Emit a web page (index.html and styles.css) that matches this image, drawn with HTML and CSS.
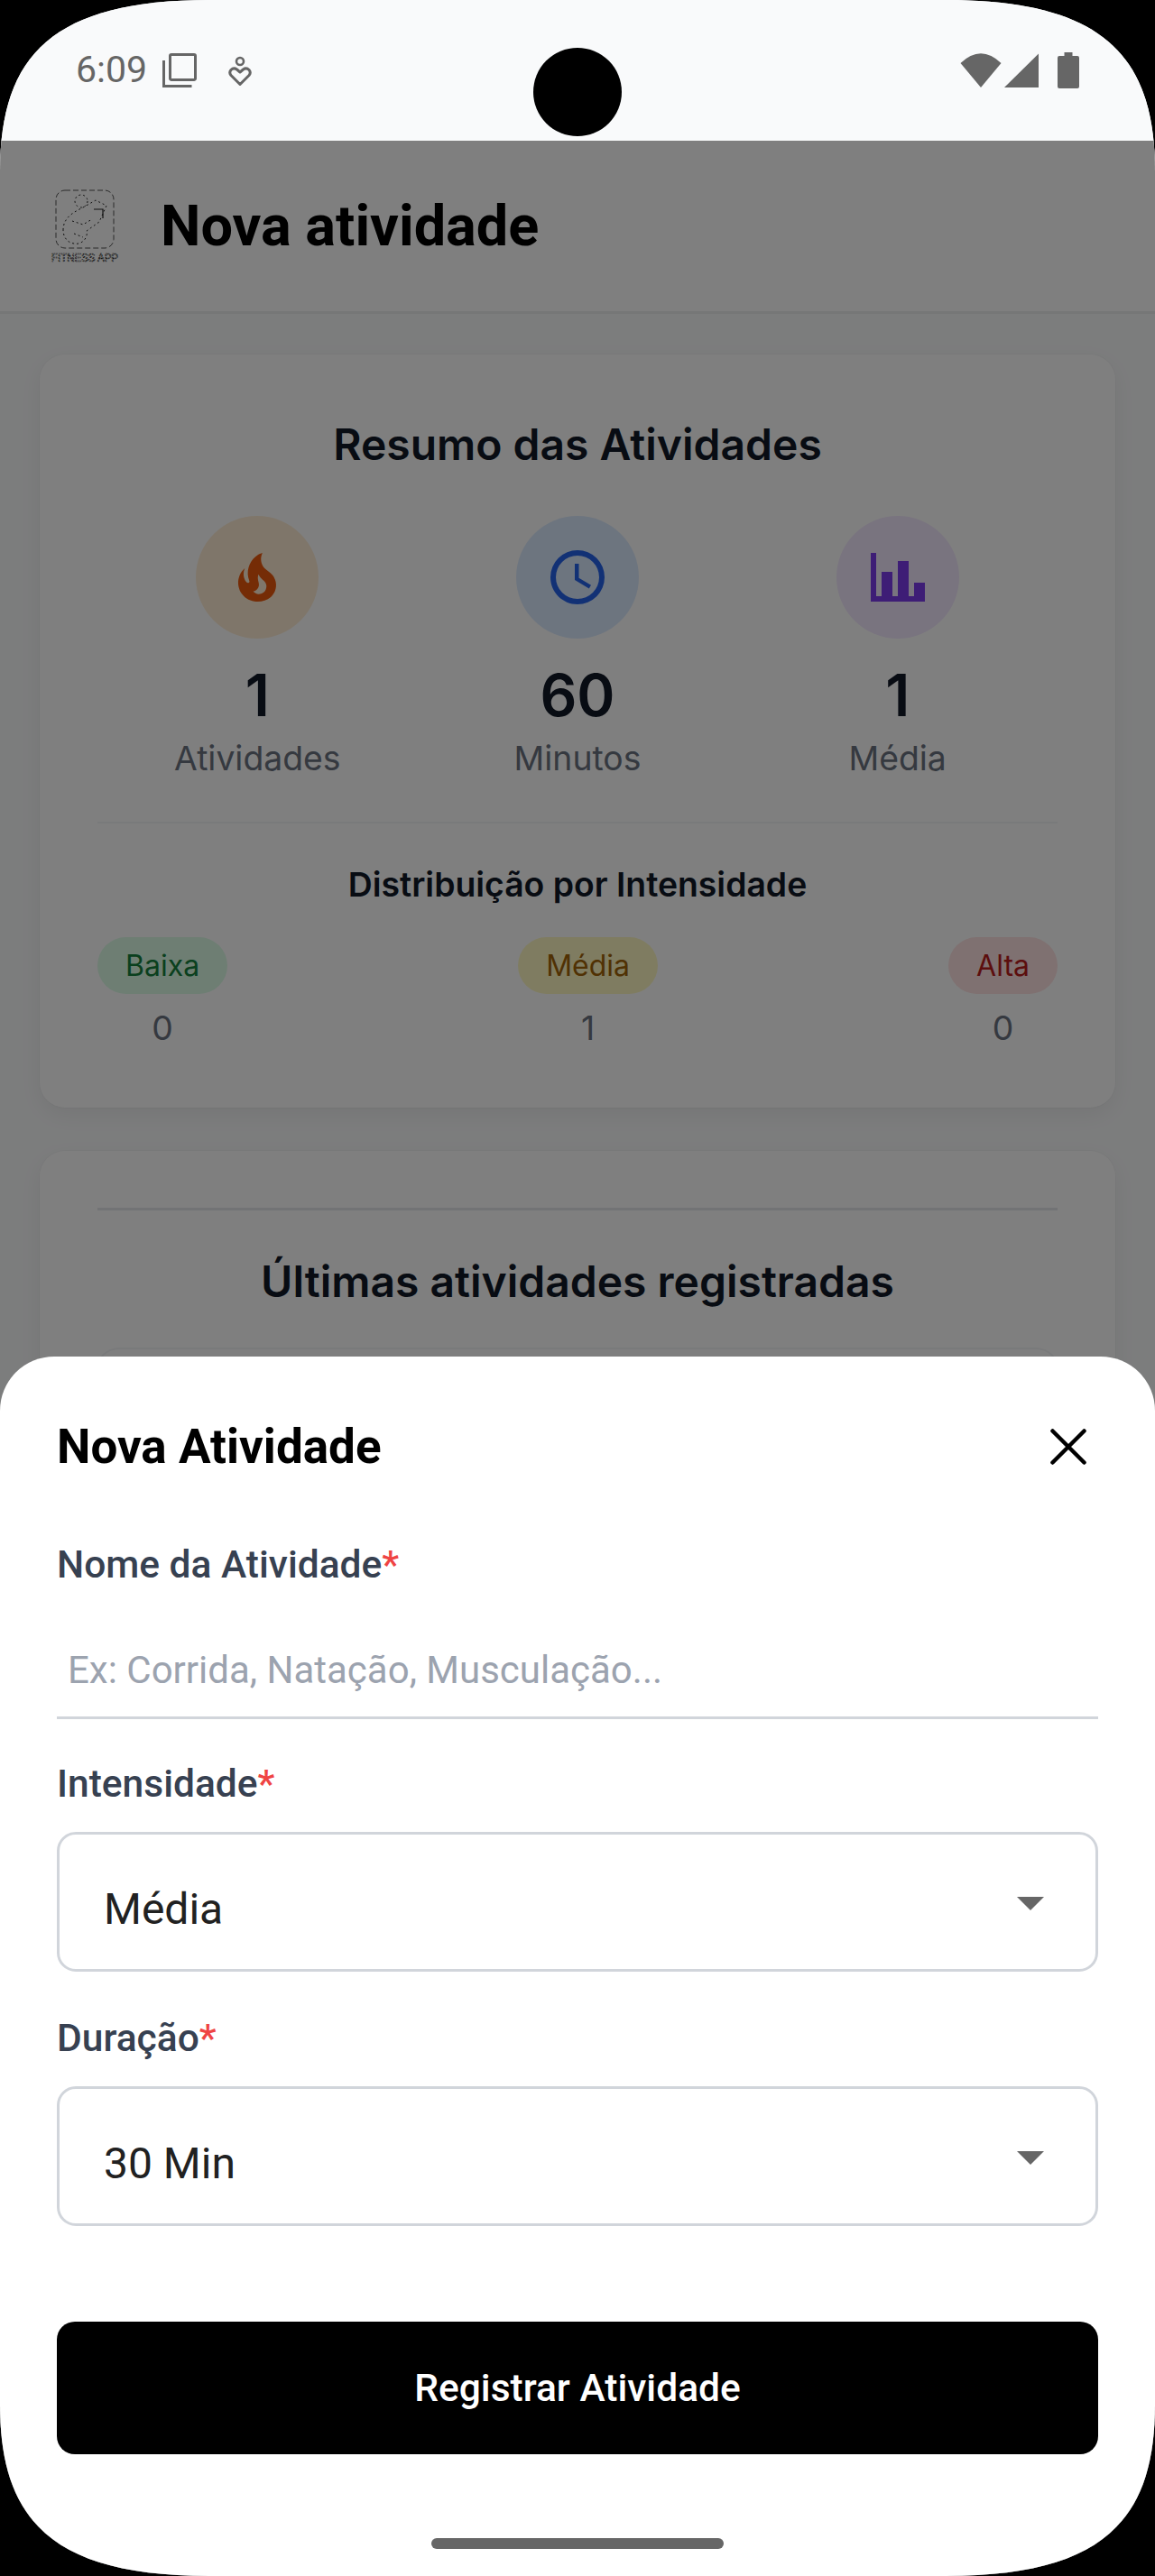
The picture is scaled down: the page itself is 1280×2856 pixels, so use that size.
FILE: index.html
```html
<!DOCTYPE html>
<html lang="pt-BR">
<head>
<meta charset="utf-8">
<title>Nova atividade</title>
<link rel="stylesheet" href="styles.css">
</head>
<body>
<div class="screen">
  <div class="status-bar">
    <span class="time">6:09</span>
    <svg class="ic-copy" width="38" height="38" viewBox="0 0 38 38"><path d="M10 1.500h25a1.500 1.500 0 0 1 1.500 1.500v25a1.500 1.500 0 0 1-1.500 1.500h-25a1.500 1.500 0 0 1-1.500-1.500v-25a1.500 1.500 0 0 1 1.500-1.500zM1.500 8v28.500h31" fill="none" stroke="#666" stroke-width="3"/></svg>
    <svg class="ic-care" width="26" height="34" viewBox="0 0 26 34"><circle cx="13" cy="6" r="4" fill="none" stroke="#666" stroke-width="2.600"/><path d="M13 31.500 3 21.500q-2.500-3 0-6 3-3 6.500-.5l3.500 3 3.500-3q3.500-2.500 6.500.5 2.500 3 0 6z" fill="none" stroke="#666" stroke-width="3" stroke-linejoin="round"/></svg>
    <span class="camera"></span>
    <span class="status-right">
      <svg width="46" height="40" viewBox="0 0 46 40"><path d="M23 39 0.500 12Q23-9.500 45.500 12Z" fill="#666"/></svg>
      <svg class="ic-signal" width="38" height="38" viewBox="0 0 38 38"><path d="M38 0.500V38H0Z" fill="#666"/></svg>
      <svg class="ic-battery" width="24" height="40" viewBox="0 0 24 40"><path d="M7.500 0h9v4h5.500a2 2 0 0 1 2 2v32a2 2 0 0 1-2 2h-20a2 2 0 0 1-2-2v-32a2 2 0 0 1 2-2h5.500z" fill="#666"/></svg>
    </span>
  </div>

  <header class="app-header">
    <svg class="logo" width="92" height="84" viewBox="-8 0 92 84">
      <rect x="6" y="2" width="64" height="64" rx="10" fill="none" stroke="#555" stroke-width="1" stroke-dasharray="6 3"/>
      <g fill="none" stroke="#222" stroke-width="1" stroke-dasharray="2 3">
        <ellipse cx="34" cy="14" rx="7" ry="7"/>
        <path d="M14 46c0-14 12-20 22-25l14-8 12 6-8 18-14 10c2 8-6 16-14 14-8-1-12-8-12-15z"/>
        <path d="M24 36l12 4 10-6M26 50l10 4"/>
      </g>
      <path d="M48 23h10v10" fill="none" stroke="#222" stroke-width="1.200"/>
      <text class="logo-text" x="1" y="81" textLength="74" lengthAdjust="spacingAndGlyphs">FITNESS APP</text>
    </svg>
    <h1 class="page-title">Nova atividade</h1>
  </header>

  <main class="content">
    <section class="card">
      <h2 class="card-title">Resumo das Atividades</h2>
      <div class="stats">
        <div class="stat">
          <span class="stat-icon orange"><svg width="72" height="72" viewBox="0 0 24 24"><path d="M17.660 11.200C17.430 10.900 17.150 10.640 16.890 10.380C16.220 9.780 15.460 9.350 14.820 8.720C13.330 7.260 13 4.850 13.950 3C13 3.230 12.170 3.750 11.460 4.320C8.870 6.400 7.850 10.070 9.070 13.220C9.110 13.320 9.150 13.420 9.150 13.550C9.150 13.770 9 13.970 8.800 14.050C8.570 14.150 8.330 14.090 8.140 13.930C8.080 13.880 8.040 13.830 8 13.760C6.870 12.330 6.690 10.280 7.450 8.640C5.780 10 4.870 12.300 5 14.470C5.060 14.970 5.120 15.470 5.290 15.970C5.430 16.570 5.700 17.170 6 17.700C7.080 19.430 8.950 20.670 10.960 20.920C13.100 21.190 15.390 20.800 17.030 19.320C18.860 17.660 19.500 15 18.560 12.720L18.430 12.460C18.220 12 17.660 11.200 17.660 11.200M14.500 17.500C14.220 17.740 13.760 18 13.400 18.100C12.280 18.500 11.160 17.940 10.500 17.280C11.690 17 12.400 16.120 12.610 15.230C12.780 14.430 12.460 13.770 12.330 13C12.210 12.260 12.230 11.630 12.500 10.940C12.690 11.320 12.890 11.700 13.130 12C13.900 13 15.110 13.440 15.370 14.800C15.410 14.940 15.430 15.080 15.430 15.230C15.460 16.050 15.100 16.950 14.500 17.500H14.500Z" fill="currentColor"/></svg></span>
          <span class="stat-value">1</span>
          <span class="stat-label">Atividades</span>
        </div>
        <div class="stat">
          <span class="stat-icon blue"><svg width="72" height="72" viewBox="0 0 24 24"><path d="M12 20A8 8 0 0 0 20 12A8 8 0 0 0 12 4A8 8 0 0 0 4 12A8 8 0 0 0 12 20M12 2A10 10 0 0 1 22 12A10 10 0 0 1 12 22C6.470 22 2 17.500 2 12A10 10 0 0 1 12 2M12.500 7V12.250L17 14.920L16.250 16.150L11 13V7H12.500Z" fill="currentColor"/></svg></span>
          <span class="stat-value">60</span>
          <span class="stat-label">Minutos</span>
        </div>
        <div class="stat">
          <span class="stat-icon purple"><svg width="72" height="72" viewBox="0 0 24 24"><path d="M22 21H2V3H4V19H6V10H10V19H12V6H16V19H18V14H22V21Z" fill="currentColor"/></svg></span>
          <span class="stat-value">1</span>
          <span class="stat-label">Média</span>
        </div>
      </div>
      <div class="rule"></div>
      <h3 class="dist-title">Distribuição por Intensidade</h3>
      <div class="dist">
        <div class="dist-item"><span class="pill low">Baixa</span><span class="dist-value">0</span></div>
        <div class="dist-item"><span class="pill mid">Média</span><span class="dist-value">1</span></div>
        <div class="dist-item"><span class="pill high">Alta</span><span class="dist-value">0</span></div>
      </div>
    </section>

    <section class="card card-latest">
      <div class="rule-strong"></div>
      <h2 class="latest-title">Últimas atividades registradas</h2>
      <div class="latest-item"></div>
    </section>
  </main>

  <div class="backdrop"></div>

  <aside class="sheet">
    <div class="sheet-head">
      <h2 class="sheet-title">Nova Atividade</h2>
      <svg class="close" width="40" height="40" viewBox="0 0 40 40"><path d="M2.500 2.500 37.500 37.500M37.500 2.500 2.500 37.500" stroke="#000" stroke-width="4.500" stroke-linecap="round"/></svg>
    </div>

    <div class="field-label first">Nome da Atividade<span class="req">*</span></div>
    <div class="text-input">Ex: Corrida, Natação, Musculação...</div>

    <div class="field-label second">Intensidade<span class="req">*</span></div>
    <div class="select"><span>Média</span><span class="caret"></span></div>

    <div class="field-label third">Duração<span class="req">*</span></div>
    <div class="select"><span>30 Min</span><span class="caret"></span></div>

    <button class="submit" type="button">Registrar Atividade</button>
    <div class="home-bar"></div>
  </aside>
</div>
</body>
</html>
```

FILE: styles.css
```css
* { box-sizing: border-box; }

html, body {
  margin: 0;
  padding: 0;
  background: #000;
}

.screen {
  position: relative;
  width: 1280px;
  height: 2856px;
  overflow: hidden;
  background: #f9fafb;
  font-family: Roboto, sans-serif;
  clip-path: path("M0 190C0 60 60 0 232 0H1048C1220 0 1280 60 1280 190V2666C1280 2796 1220 2856 1048 2856H232C60 2856 0 2796 0 2666Z");
}

h1, h2, h3 { margin: 0; }

/* Status bar */
.status-bar {
  position: relative;
  display: flex;
  align-items: flex-start;
  height: 156px;
  padding: 54px 84px 0 84px;
  background: #f9fafb;
}

.time {
  font-size: 41px;
  line-height: 47px;
  color: #666;
}

.ic-copy { margin: 5px 0 0 17px; }
.ic-care { margin: 8px 0 0 35px; }

.camera {
  position: absolute;
  left: 591px;
  top: 53px;
  width: 98px;
  height: 98px;
  border-radius: 50%;
  background: #000;
}

.status-right {
  display: flex;
  align-items: flex-start;
  gap: 3px;
  margin-left: auto;
  padding-top: 4px;
}

.ic-signal { margin-top: 1px; }
.ic-battery { margin-left: 18px; }

/* Header */
.app-header {
  display: flex;
  align-items: center;
  height: 192px;
  padding-left: 48px;
  background: #fff;
  border-bottom: 3px solid #eceeef;
}

.logo { flex: none; }

.logo-text {
  font-family: "Liberation Sans", sans-serif;
  font-size: 13px;
  fill: none;
  stroke: #111;
  stroke-width: 0.700;
  stroke-dasharray: 2 1;
}

.page-title {
  margin-left: 38px;
  font-size: 63px;
  line-height: 72px;
  font-weight: 700;
  color: #000;
}

/* Content */
.content {
  padding: 45px 44px 0;
  font-family: Inter, sans-serif;
}

.card {
  height: 835px;
  padding: 72px 64px 0;
  background: #fff;
  border-radius: 28px;
  box-shadow: 0 0 0 1px rgba(0, 0, 0, 0.02), 0 8px 24px rgba(0, 0, 0, 0.06);
}

.card-title {
  font-size: 48px;
  line-height: 56px;
  font-weight: 600;
  text-align: center;
  color: #111827;
}

.stats {
  display: grid;
  grid-template-columns: repeat(3, 1fr);
  margin-top: 51px;
}

.stat {
  display: flex;
  flex-direction: column;
  align-items: center;
}

.stat-icon {
  display: flex;
  align-items: center;
  justify-content: center;
  width: 136px;
  height: 136px;
  border-radius: 50%;
}

.orange { background: #ffedd5; color: #ea580c; }
.blue { background: #dbeafe; color: #2563eb; }
.purple { background: #f3e8ff; color: #7c3aed; }

.stat-value {
  margin-top: 25px;
  font-size: 64px;
  line-height: 76px;
  font-weight: 600;
  color: #111827;
}

.stat-label {
  margin-top: 10px;
  font-size: 37.330px;
  line-height: 44px;
  color: #6b7280;
}

.rule {
  height: 2px;
  margin-top: 48px;
  background: #f3f4f6;
}

.dist-title {
  margin-top: 46px;
  font-size: 37.330px;
  line-height: 44px;
  font-weight: 600;
  text-align: center;
  color: #111827;
}

.dist {
  display: flex;
  justify-content: space-between;
  margin-top: 36px;
}

.dist-item {
  display: flex;
  flex-direction: column;
  align-items: center;
}

.pill {
  height: 63px;
  padding: 0 31px;
  border-radius: 32px;
  font-size: 32px;
  line-height: 63px;
}

.low { background: #dcfce7; color: #15803d; }
.mid { background: #fef9c3; color: #a16207; }
.high { background: #fee2e2; color: #b91c1c; }

.dist-value {
  margin-top: 16px;
  font-size: 37.330px;
  line-height: 44px;
  color: #6b7280;
}

.card-latest {
  height: 600px;
  margin-top: 48px;
  padding-top: 63px;
}

.rule-strong {
  height: 3px;
  background: #e5e7eb;
}

.latest-title {
  margin-top: 51px;
  font-size: 48px;
  line-height: 56px;
  font-weight: 600;
  text-align: center;
  color: #111827;
}

.latest-item {
  height: 200px;
  margin-top: 47px;
  background: #fff;
  border-radius: 24px;
  box-shadow: 0 0 0 2px #f3f4f6;
}

/* Backdrop and sheet */
.backdrop {
  position: absolute;
  left: 0;
  right: 0;
  top: 156px;
  bottom: 0;
  background: rgba(0, 0, 0, 0.5);
}

.sheet {
  position: absolute;
  left: 0;
  right: 0;
  bottom: 0;
  display: flex;
  flex-direction: column;
  height: 1352px;
  padding: 0 63px;
  background: #fff;
  border-radius: 60px 60px 0 0;
}

.sheet-head {
  display: flex;
  align-items: center;
  justify-content: space-between;
  height: 62px;
  margin-top: 69px;
  padding: 0 13px 0 0;
}

.sheet-title {
  font-size: 53px;
  line-height: 62px;
  font-weight: 700;
  color: #000;
}

.close { flex: none; }

.field-label {
  font-size: 42.500px;
  line-height: 48px;
  font-weight: 500;
  color: #374151;
}

.field-label.first { margin-top: 76px; }
.field-label.second { margin-top: 48px; }
.field-label.third { margin-top: 50px; }

.req { color: #ef4444; }

.text-input {
  height: 131px;
  margin-top: 16px;
  padding: 53px 0 0 12px;
  border-bottom: 3px solid #d1d5db;
  font-size: 42px;
  line-height: 48px;
  color: #9ca3af;
}

.select {
  display: flex;
  align-items: center;
  justify-content: space-between;
  height: 155px;
  margin-top: 29px;
  padding: 15px 57px 0 49px;
  border: 3px solid #d1d5db;
  border-radius: 21px;
  font-size: 48px;
  color: #212121;
}

.caret {
  width: 0;
  height: 0;
  margin-top: -11px;
  border-left: 15px solid transparent;
  border-right: 15px solid transparent;
  border-top: 15px solid #666;
}

.submit {
  flex: none;
  width: 100%;
  height: 147px;
  margin-top: 106px;
  border: 0;
  border-radius: 20px;
  background: #000;
  color: #fff;
  font-family: Roboto, sans-serif;
  font-size: 42.500px;
  font-weight: 500;
}

.home-bar {
  flex: none;
  align-self: center;
  width: 324px;
  height: 12px;
  margin-top: 93px;
  border-radius: 6px;
  background: #666;
}
```
